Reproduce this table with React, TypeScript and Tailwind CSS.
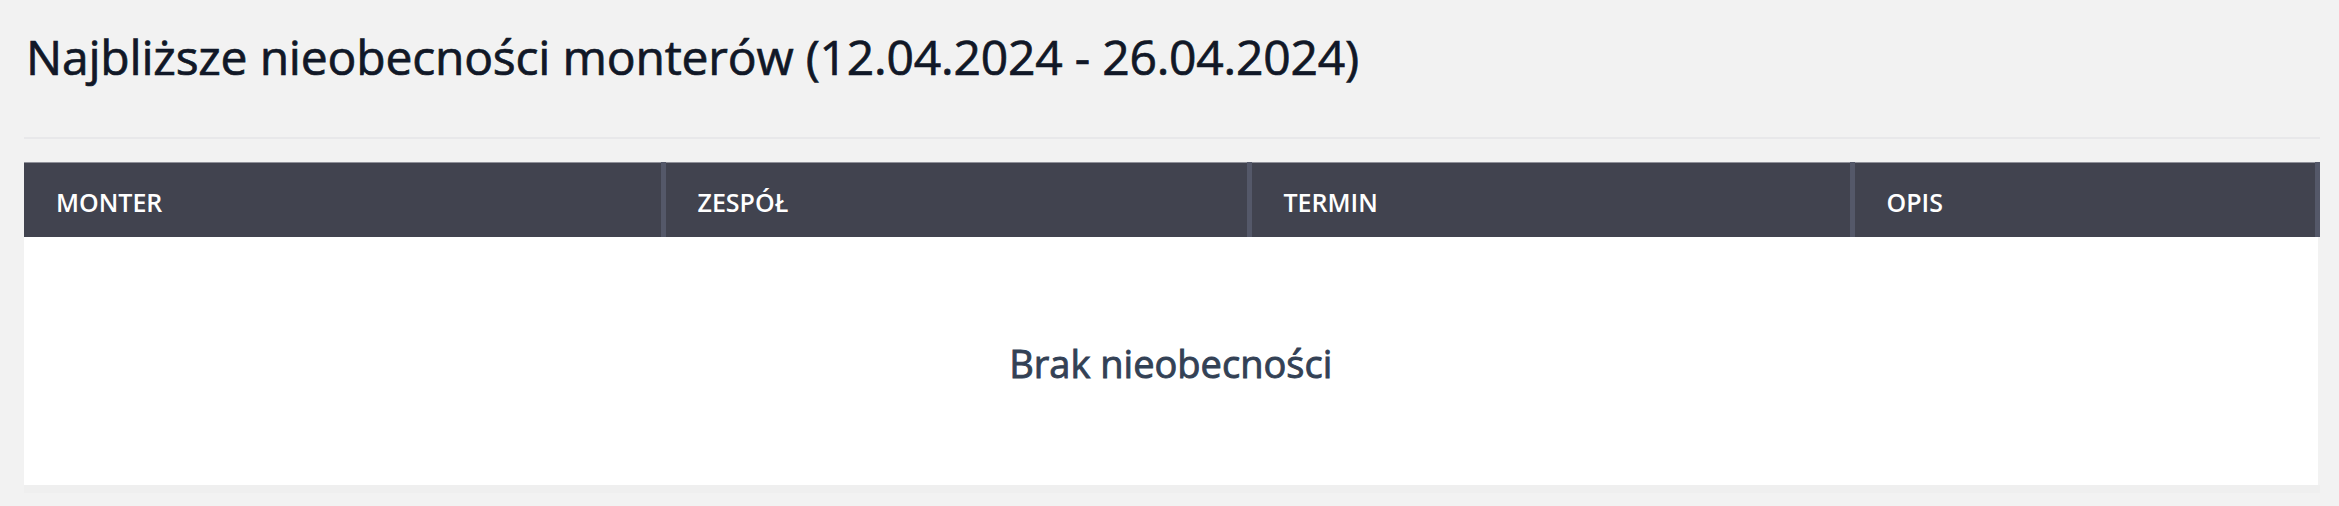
import React from "react";

export default function App() {
  const font = { fontFamily: '"Open Sans", "Noto Sans", sans-serif' };
  return (
    <div className="min-h-screen w-full bg-[#f2f2f2] pl-6 pr-[19px] pt-[29px] pb-[13px]" style={font}>
      <h1 className="m-0 pl-[2px] text-[48px] leading-[56px] font-normal text-[#111827] tracking-[-0.2px] [-webkit-text-stroke:0.7px_#111827]">
        Najbliższe nieobecności monterów (12.04.2024 - 26.04.2024)
      </h1>
      <div className="mt-[52px] h-[2px] bg-[#e8e8ea]" />
      <div className="mt-[23px] border-b-[8px] border-[#efefef]">
        <table className="w-full border-collapse table-fixed">
          <colgroup>
            <col className="w-[639px]" />
            <col className="w-[586px]" />
            <col className="w-[603px]" />
            <col />
          </colgroup>
          <thead>
            <tr className="h-[74px] bg-[#41434f] border-t border-[#8f9099]">
              <th className="pl-8 pt-[5px] text-left text-[25px] font-semibold text-white border-r-[5px] border-[#545869]">MONTER</th>
              <th className="pl-8 pt-[5px] text-left text-[25px] font-semibold text-white border-r-[5px] border-[#545869]">ZESPÓŁ</th>
              <th className="pl-8 pt-[5px] text-left text-[25px] font-semibold text-white border-r-[5px] border-[#545869]">TERMIN</th>
              <th className="pl-8 pt-[5px] text-left text-[25px] font-semibold text-white border-r-[5px] border-[#545869]">OPIS</th>
            </tr>
          </thead>
          <tbody>
            <tr className="h-[248px] bg-white">
              <td colSpan={4} className="pt-[6px] text-center align-middle text-[38px] font-normal text-[#334155] [-webkit-text-stroke:0.9px_#334155]">
                Brak nieobecności
              </td>
            </tr>
          </tbody>
        </table>
      </div>
    </div>
  );
}
